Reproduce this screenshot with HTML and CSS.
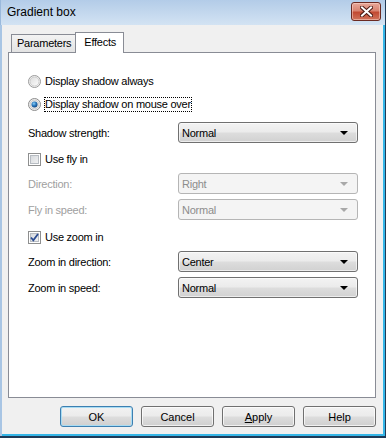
FILE: index.html
```html
<!DOCTYPE html>
<html>
<head>
<meta charset="utf-8">
<link rel="stylesheet" href="styles.css">
</head>
<body>
<div class="window">
  <div class="titlebar">
    <span class="title">Gradient box</span>
    <div class="close">
      <svg width="13" height="11" viewBox="0 0 13 11">
        <path d="M2 1.5 L11 9.5 M11 1.5 L2 9.5" stroke="#4a1a14" stroke-width="4" stroke-linecap="square" fill="none"/>
        <path d="M2 1.5 L11 9.5 M11 1.5 L2 9.5" stroke="#ffffff" stroke-width="2" stroke-linecap="square" fill="none"/>
      </svg>
    </div>
  </div>
  <div class="client">
    <div class="tabs">
      <div class="tab">Parameters</div>
      <div class="tab active">Effects</div>
    </div>
    <div class="panel">
      <div class="row check-row gap-a">
        <svg class="radio" width="13" height="13" viewBox="0 0 13 13">
          <defs>
            <linearGradient id="rb" x1="0" y1="0" x2="1" y2="1"><stop offset="0" stop-color="#dcdcdc"/><stop offset="1" stop-color="#fdfdfd"/></linearGradient>
          </defs>
          <circle cx="6.5" cy="6.5" r="6" fill="#f4f4f4" stroke="#9a9a9a"/>
          <circle cx="6.5" cy="6.5" r="4.5" fill="url(#rb)" stroke="#c4c4c4" stroke-width="0.8"/>
        </svg>
        <span class="lbl">Display shadow always</span>
      </div>
      <div class="row check-row gap-b">
        <svg class="radio" width="13" height="13" viewBox="0 0 13 13">
          <defs>
            <radialGradient id="rd" cx="0.4" cy="0.35" r="0.7"><stop offset="0" stop-color="#8fd0f5"/><stop offset="0.5" stop-color="#2a7ac0"/><stop offset="1" stop-color="#0d3f7a"/></radialGradient>
          </defs>
          <circle cx="6.5" cy="6.5" r="6" fill="#f4f4f4" stroke="#8c8c8c"/>
          <circle cx="6.5" cy="6.5" r="4.5" fill="#e4e4e4" stroke="#c4c4c4" stroke-width="0.8"/>
          <circle cx="6.5" cy="6.5" r="3" fill="url(#rd)"/>
        </svg>
        <span class="lbl focus">Display shadow on mouse over</span>
      </div>
      <div class="row combo-row gap-c">
        <span class="field">Shadow strength:</span>
        <div class="combo"><span>Normal</span><i class="arrow"></i></div>
      </div>
      <div class="row check-row gap-d">
        <span class="checkbox"></span>
        <span class="lbl">Use fly in</span>
      </div>
      <div class="row combo-row gap-e">
        <span class="field disabled">Direction:</span>
        <div class="combo disabled"><span>Right</span><i class="arrow"></i></div>
      </div>
      <div class="row combo-row gap-f">
        <span class="field disabled">Fly in speed:</span>
        <div class="combo disabled"><span>Normal</span><i class="arrow"></i></div>
      </div>
      <div class="row check-row gap-g">
        <span class="checkbox">
          <svg width="9" height="9" viewBox="0 0 9 9"><path d="M1 4.5 L3.3 7.3 L8 1" stroke="#2b4c92" stroke-width="1.8" fill="none"/></svg>
        </span>
        <span class="lbl">Use zoom in</span>
      </div>
      <div class="row combo-row gap-e">
        <span class="field">Zoom in direction:</span>
        <div class="combo"><span>Center</span><i class="arrow"></i></div>
      </div>
      <div class="row combo-row gap-f">
        <span class="field">Zoom in speed:</span>
        <div class="combo"><span>Normal</span><i class="arrow"></i></div>
      </div>
    </div>
    <div class="buttons">
      <div class="btn default">OK</div>
      <div class="btn">Cancel</div>
      <div class="btn"><u>A</u>pply</div>
      <div class="btn">Help</div>
    </div>
  </div>
</div>
</body>
</html>
```

FILE: styles.css
```css
html, body {
  margin: 0;
  padding: 0;
  background: #f0f0f0;
}
body {
  font-family: "Liberation Sans", Arial, sans-serif;
  font-size: 11px;
  letter-spacing: -0.25px;
  color: #000;
}
.window {
  width: 386px;
  height: 438px;
  box-sizing: border-box;
  display: flex;
  flex-direction: column;
  background: #f0f0f0;
  border-right: 1px solid #1f3a57;
  border-bottom: 2px solid #1f3a57;
  box-shadow: inset -2px -2px 0 #35b6e8;
}
.titlebar {
  height: 25px;
  flex: none;
  display: flex;
  align-items: center;
  justify-content: space-between;
  background: linear-gradient(#b3cce8, #d3e3f3);
  border-left: 1px solid #9ab9dc;
  padding: 0 3px 0 6px;
}
.title {
  font-size: 12px;
  letter-spacing: 0;
  color: #000;
  padding-bottom: 1px;
}
.close {
  width: 28px;
  height: 17px;
  margin-top: -2px;
  margin-right: 1px;
  border: 1px solid #6b2a22;
  border-radius: 3px;
  background: linear-gradient(#e8a89a 0%, #d98471 45%, #c24a32 55%, #d0735c 100%);
  display: flex;
  align-items: center;
  justify-content: center;
  box-shadow: inset 0 0 0 1px rgba(255, 220, 210, 0.5);
}
.close svg { display: block; }
.client {
  flex: 1;
  display: flex;
  flex-direction: column;
  padding: 7px 0 0 6px;
  border-left: 2px solid #a8c5e4;
}
.tabs {
  display: flex;
  align-items: flex-end;
  height: 20px;
  padding-left: 3px;
  position: relative;
  z-index: 1;
}
.tab {
  height: 18px;
  box-sizing: border-box;
  padding: 0 4px 0 5px;
  line-height: 17px;
  border: 1px solid #898c95;
  border-bottom: none;
  background: linear-gradient(#f3f3f3, #e3e3e3);
}
.tab:first-child { border-right: none; }
.tab.active {
  height: 21px;
  margin-bottom: -1px;
  background: #fff;
  padding: 0 7px 0 8px;
  line-height: 18px;
}
.panel {
  width: 368px;
  height: 346px;
  box-sizing: border-box;
  background: #fff;
  border: 1px solid #898c95;
  padding: 22px 16px 0 19px;
  display: flex;
  flex-direction: column;
}
.row {
  display: flex;
  align-items: center;
}
.check-row { height: 13px; }
.combo-row { height: 21px; }
.gap-a { margin-top: 0; }
.gap-b { margin-top: 10px; }
.gap-c { margin-top: 11px; }
.gap-d { margin-top: 10px; }
.gap-e { margin-top: 7px; }
.gap-f { margin-top: 5px; }
.gap-g { margin-top: 11px; }
.radio { display: block; flex: none; }
.lbl {
  margin-left: 4px;
  line-height: 13px;
  white-space: nowrap;
}
.lbl.focus {
  margin-left: 3px;
  padding: 1px 1px;
  outline: 1px dotted #000;
  outline-offset: -1px;
}
.checkbox {
  width: 13px;
  height: 13px;
  box-sizing: border-box;
  flex: none;
  border: 1px solid #8e8f8f;
  background: #f4f4f4;
  box-shadow: inset 0 0 0 1px #fff, inset 0 0 0 2px #b7bcc2;
  background-image: linear-gradient(135deg, #cfd3d8, #f8f8f8);
  display: flex;
  align-items: center;
  justify-content: center;
}
.checkbox svg { display: block; }
.field {
  width: 150px;
  flex: none;
  white-space: nowrap;
}
.field.disabled { color: #a0a0a0; }
.combo {
  width: 180px;
  height: 21px;
  box-sizing: border-box;
  border: 1px solid #707070;
  border-radius: 3px;
  background: linear-gradient(#f3f3f3 0%, #ebebeb 48%, #dddddd 52%, #d1d1d1 100%);
  box-shadow: inset 0 0 0 1px rgba(255,255,255,0.6);
  display: flex;
  align-items: center;
  justify-content: space-between;
  padding: 0 9px 0 3px;
}
.arrow {
  width: 0;
  height: 0;
  border-left: 4px solid transparent;
  border-right: 4px solid transparent;
  border-top: 4px solid #000;
  margin-top: 1px;
}
.combo.disabled {
  border-color: #b5b5b5;
  background: #f4f4f4;
  box-shadow: none;
  color: #8d8d8d;
}
.combo.disabled .arrow { border-top-color: #a8a8a8; }
.buttons {
  display: flex;
  justify-content: flex-end;
  gap: 8px;
  width: 368px;
  margin-top: 8px;
}
.btn {
  width: 73px;
  height: 21px;
  box-sizing: border-box;
  border: 1px solid #707070;
  border-radius: 3px;
  background: linear-gradient(#f2f2f2 0%, #ebebeb 48%, #dddddd 52%, #cfcfcf 100%);
  box-shadow: inset 0 0 0 1px rgba(255,255,255,0.7);
  display: flex;
  align-items: center;
  justify-content: center;
  letter-spacing: 0;
}
.btn u { text-decoration: underline; }
.btn.default {
  border-color: #3c7fb1;
  box-shadow: inset 0 0 0 1px #a8dcf3;
}
```
